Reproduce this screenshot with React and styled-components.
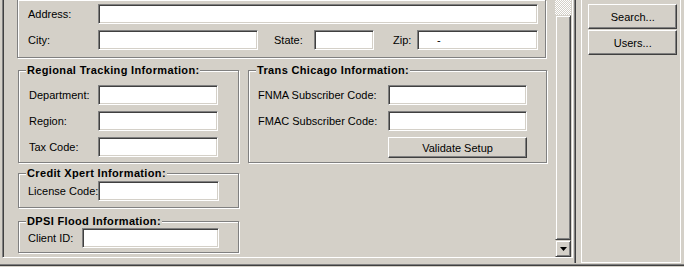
import React from 'react'
import styled, { createGlobalStyle } from 'styled-components'

const Global = createGlobalStyle`
  html, body {
    margin: 0;
    padding: 0;
    background: #d4d0c8;
    overflow: hidden;
  }
  body {
    font-family: "Liberation Sans", Arial, sans-serif;
    font-size: 11px;
    color: #000;
  }
`

const Window = styled.div`
  width: 684px;
  height: 267px;
  display: flex;
  flex-direction: column;
  background: #d4d0c8;
`

const Main = styled.div`
  display: flex;
  height: 263px;
`

const BottomEdge = styled.div`
  height: 1px;
  margin-top: 1px;
  background: #808080;
  border-bottom: 1px solid #404040;
`

const LeftPanel = styled.div`
  width: 575px;
  padding-left: 2px;
  border-right: 1px solid #404040;
  box-shadow: inset -1px 0 #808080;
  display: flex;
  flex-direction: column;
`

const ScrollBox = styled.div`
  display: flex;
  height: 258px;
  width: 571px;
  border-left: 1px solid #808080;
  border-right: 1px solid #fff;
  border-bottom: 1px solid #fff;
  box-shadow: inset 1px 0 #404040, inset -1px -1px #d4d0c8;
  padding-left: 1px;
  padding-right: 1px;
  box-sizing: border-box;
`

const Content = styled.div`
  width: 551px;
  display: flex;
  flex-direction: column;
`

const Splitter = styled.div`
  width: 5px;
  border-right: 1px solid #fff;
`

const Group = styled.fieldset`
  margin: ${p => p.$mt || '0'} 0 0 0;
  padding: ${p => p.$pt || '2px'} 0 ${p => p.$pb || '6px'} 0;
  border: 1px solid #808080;
  box-shadow: inset 1px 1px #fff, 1px 1px #fff;
  min-width: 0;
  display: flex;
  flex-direction: column;
  gap: 6px;
  box-sizing: border-box;

  & > div {
    margin-left: ${p => p.$indent || '9px'};
  }
`

const AddressGroup = styled(Group)`
  margin-left: 13px;
  width: 529px;
  border-top: none;
`

const Legend = styled.legend`
  font-weight: bold;
  letter-spacing: 0.35px;
  padding: 0 1px;
  margin-left: 7px;
  line-height: 12px;
  background: #d4d0c8;
`

const Columns = styled.div`
  display: flex;
  align-items: flex-start;
  gap: 9px;
  margin-top: 6px;
  margin-left: 14px;
`

const Column = styled.div`
  display: flex;
  flex-direction: column;
  width: ${p => p.$w};
`

const Row = styled.div`
  display: flex;
  align-items: center;
  height: ${p => p.$h || '20px'};
`

const Label = styled.span`
  width: ${p => p.$w};
  flex: none;
  white-space: nowrap;
  margin-left: ${p => p.$ml || '0'};
`

const Field = styled.div`
  width: ${p => p.$w};
  height: 20px;
  box-sizing: border-box;
  background: #fff;
  border: 1px solid;
  border-color: #808080 #fff #fff #808080;
  box-shadow: inset 1px 1px #404040, inset -1px -1px #d4d0c8;
  padding: 3px 0 0 19px;
  line-height: 12px;
`

const Button = styled.div`
  width: ${p => p.$w};
  height: ${p => p.$h || '21px'};
  box-sizing: border-box;
  border: 1px solid;
  border-color: #fff #404040 #404040 #fff;
  box-shadow: inset -1px -1px #808080;
  display: flex;
  align-items: center;
  justify-content: center;
  padding-top: 1px;
`

const ScrollBar = styled.div`
  width: 16px;
  display: flex;
  flex-direction: column;
`

const Track = styled.div`
  height: 15px;
  background-image: conic-gradient(#fff 25%, #d4d0c8 0 50%, #fff 0 75%, #d4d0c8 0);
  background-size: 2px 2px;
`

const Thumb = styled.div`
  flex: 1;
  box-sizing: border-box;
  border: 1px solid;
  border-color: #d4d0c8 #404040 #404040 #d4d0c8;
  box-shadow: inset 1px 1px #fff, inset -1px -1px #808080;
`

const Arrow = styled(Thumb)`
  flex: none;
  height: 17px;
  display: flex;
  align-items: center;
  justify-content: center;
`

const RightPanel = styled.div`
  width: 99px;
  margin-right: 3px;
  border-right: 1px solid #fff;
  border-bottom: 1px solid #fff;
  padding: 4px 0 0 6px;
  box-sizing: border-box;
  display: flex;
  flex-direction: column;
  gap: 1px;
`

const FormRow = ({ label, lw, fw, value }) => (
  <Row>
    <Label $w={lw}>{label}</Label>
    <Field $w={fw}>{value}</Field>
  </Row>
)

export default function App() {
  return (
    <Window>
      <Global />
      <Main>
        <LeftPanel>
          <ScrollBox>
            <Content>
              <AddressGroup $pt="4px" $pb="7px" $indent="10px">
                <Row>
                  <Label $w="70px">Address:</Label>
                  <Field $w="440px" />
                </Row>
                <Row>
                  <Label $w="70px">City:</Label>
                  <Field $w="160px" />
                  <Label $w="40px" $ml="16px">State:</Label>
                  <Field $w="60px" />
                  <Label $w="24px" $ml="19px">Zip:</Label>
                  <Field $w="121px">-</Field>
                </Row>
              </AddressGroup>
              <Columns>
                <Column $w="221px">
                  <Group $pt="9px" $pb="5px" $indent="10px">
                    <Legend>Regional Tracking Information:</Legend>
                    <FormRow label="Department:" lw="69px" fw="120px" />
                    <FormRow label="Region:" lw="69px" fw="120px" />
                    <FormRow label="Tax Code:" lw="69px" fw="120px" />
                  </Group>
                  <Group $mt="4px" $pt="2px" $pb="6px" $indent="9px">
                    <Legend>Credit Xpert Information:</Legend>
                    <FormRow label="License Code:" lw="70px" fw="121px" />
                  </Group>
                  <Group $mt="7px" $pt="1px" $pb="4px" $indent="9px">
                    <Legend>DPSI Flood Information:</Legend>
                    <FormRow label="Client ID:" lw="54px" fw="137px" />
                  </Group>
                </Column>
                <Column $w="299px">
                  <Group $pt="9px" $pb="4px" $indent="9px">
                    <Legend>Trans Chicago Information:</Legend>
                    <FormRow label="FNMA Subscriber Code:" lw="130px" fw="139px" />
                    <FormRow label="FMAC Subscriber Code:" lw="130px" fw="139px" />
                    <Row $h="21px">
                      <Label $w="130px" />
                      <Button $w="139px">Validate Setup</Button>
                    </Row>
                  </Group>
                </Column>
              </Columns>
            </Content>
            <ScrollBar>
              <Track />
              <Thumb />
              <Arrow>
                <svg width="7" height="4" viewBox="0 0 7 4">
                  <path d="M0 0h7L3.5 4z" fill="#000" />
                </svg>
              </Arrow>
            </ScrollBar>
          </ScrollBox>
        </LeftPanel>
        <Splitter />
        <RightPanel>
          <Button $w="89px" $h="25px">Search...</Button>
          <Button $w="89px" $h="25px">Users...</Button>
        </RightPanel>
      </Main>
      <BottomEdge />
    </Window>
  )
}
